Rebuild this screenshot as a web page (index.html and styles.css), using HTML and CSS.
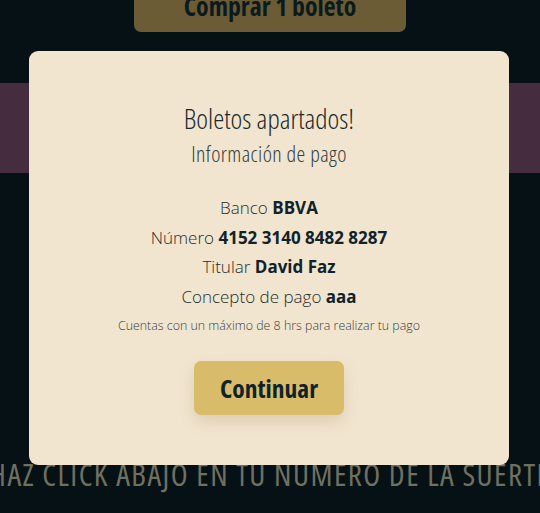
FILE: index.html
```html
<!DOCTYPE html>
<html lang="es">
<head>
<meta charset="utf-8">
<title>Boletos</title>
<link rel="stylesheet" href="styles.css">
</head>
<body>
<main class="page">
  <div class="buy-row">
    <button class="buy-btn">Comprar 1 boleto</button>
  </div>
  <div class="band"></div>
  <h2 class="lucky">HAZ CLICK ABAJO EN TU NUMERO DE LA SUERTE</h2>
</main>
<div class="modal">
  <h1 class="modal-title">Boletos apartados!</h1>
  <p class="modal-sub">Información de pago</p>
  <div class="details">
    <p class="row">Banco <b>BBVA</b></p>
    <p class="row">Número <b>4152 3140 8482 8287</b></p>
    <p class="row">Titular <b>David Faz</b></p>
    <p class="row">Concepto de pago <b>aaa</b></p>
  </div>
  <p class="note">Cuentas con un máximo de 8 hrs para realizar tu pago</p>
  <button class="continue-btn">Continuar</button>
</div>
</body>
</html>
```
FILE: styles.css
```css
html, body {
  margin: 0;
  padding: 0;
  height: 100%;
}
body {
  background: #061116;
  font-family: "Open Sans", "DejaVu Sans Condensed", sans-serif;
  font-stretch: 75%;
  overflow: hidden;
}
.page {
  display: flex;
  flex-direction: column;
  align-items: center;
}
.buy-row {
  margin-top: -22px;
  display: flex;
  justify-content: center;
}
.buy-btn {
  width: 272px;
  height: 54px;
  border: 0;
  border-radius: 7px;
  background: #6b5c35;
  color: #0b1a1e;
  font-family: inherit;
  font-stretch: 75%;
  font-weight: 700;
  font-size: 25.8px;
  padding: 2px 0 0;
}
.band {
  align-self: stretch;
  height: 90px;
  margin-top: 51px;
  background: #452c3f;
}
.lucky {
  margin: 284px 0 0;
  white-space: nowrap;
  font-weight: 400;
  font-stretch: 75%;
  font-size: 31px;
  letter-spacing: 1.45px;
  line-height: 34px;
  color: #707061;
}
.modal {
  position: fixed;
  left: 29px;
  top: 51px;
  width: 480px;
  height: 414px;
  box-sizing: border-box;
  background: #f2e5cf;
  border-radius: 9px;
  display: flex;
  flex-direction: column;
  align-items: center;
  padding-top: 52px;
  color: #2e3b3a;
}
.modal-title {
  margin: 0;
  font-weight: 300;
  font-stretch: 75%;
  font-size: 28px;
  line-height: 30px;
  color: #1b2a2b;
}
.modal-sub {
  margin: 6px 0 0;
  font-weight: 300;
  font-stretch: 75%;
  font-size: 22px;
  letter-spacing: 0.4px;
  line-height: 28px;
  color: #333f3d;
}
.details {
  margin-top: 26px;
  display: flex;
  flex-direction: column;
  align-items: center;
}
.row {
  margin: 0;
  font-weight: 300;
  font-stretch: 88%;
  font-size: 17px;
  line-height: 29.7px;
  color: #222e2d;
}
.row b {
  font-weight: 700;
  color: #10232a;
}
.note {
  margin: 4px 0 0;
  font-weight: 300;
  font-stretch: 100%;
  font-size: 12.4px;
  line-height: 20px;
  color: #333f3d;
}
.continue-btn {
  margin-top: 25px;
  width: 150px;
  height: 54px;
  border: 0;
  border-radius: 7px;
  background: #d9bc69;
  color: #10232a;
  font-family: inherit;
  font-stretch: 75%;
  font-weight: 700;
  font-size: 25.5px;
  box-shadow: 0 7px 16px rgba(110, 90, 40, 0.16);
}
```
